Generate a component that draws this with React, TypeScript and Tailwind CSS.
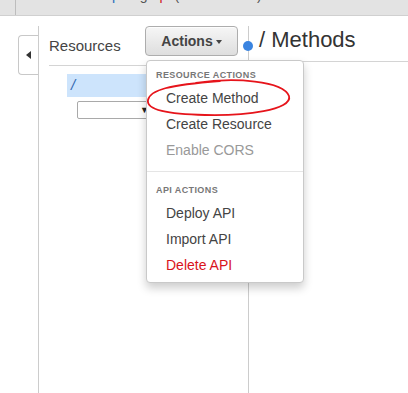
import React from "react";

export default function App() {
  return (
    <div className="relative w-[408px] h-[393px] bg-white overflow-hidden font-['Liberation_Sans',Arial,sans-serif] text-[#444]">
      {/* top bar */}
      <div className="h-[16px] bg-[#e3e3e3] border-b border-[#d0d0d0] flex">
        <div className="w-[16px] h-full border-r border-[#bdbdbd]" />
        <div className="flex-1 h-full overflow-hidden">
          <div className="-mt-[13px] flex items-start text-[14px] leading-[16px] whitespace-pre text-[#555]">
            <span className="ml-[96px] text-[#2a6ebb]">p</span>
            <span className="ml-[20px]">g</span>
            <span className="ml-[12px] text-[#d0191e]">p</span>
            <span className="ml-[7px]">(</span>
            <span className="ml-[78px]">)</span>
          </div>
        </div>
      </div>

      {/* main */}
      <div className="flex pt-[10px]">
        {/* gutter with collapse tab */}
        <div className="w-[38px] shrink-0">
          <div className="ml-[18px] mt-[9px] w-[20px] h-[40px] border border-r-0 border-[#c8c8c8] rounded-l-[4px] flex items-center justify-center">
            <div className="w-0 h-0 border-y-[4px] border-y-transparent border-r-[5px] border-r-[#333] ml-[-1px]" />
          </div>
        </div>

        {/* left panel */}
        <div className="w-[210px] shrink-0 h-[367px] border-l border-[#cccccc]">
          <div className="mx-[10px] h-[40px] border-b border-[#d4d4d4] flex items-start justify-between">
            <div className="mt-[11px] text-[15px] leading-[18px] text-[#444]">Resources</div>
            <div className="w-[93px] h-[30px] rounded-[4px] border border-[#adadad] bg-gradient-to-b from-[#f6f6f6] to-[#dedede] flex items-center justify-center gap-[3px] shadow-[inset_0_1px_0_rgba(255,255,255,0.8)]">
              <span className="text-[14px] font-bold text-[#444]">Actions</span>
              <span className="w-0 h-0 border-x-[3.5px] border-x-transparent border-t-[4px] border-t-[#444] mt-[1px]" />
            </div>
          </div>
          <div className="ml-[28px] mr-[10px] mt-[8px] h-[23px] bg-[#cde4fc] flex items-center pl-[4px]">
            <span className="text-[15px] italic text-[#3367b0]">/</span>
          </div>
          <div className="ml-[38px] mt-[4px] w-[76px] h-[18px] border border-[#a9a9a9] rounded-[2px] flex items-center justify-end pr-[3px]">
            <span className="text-[9px] leading-none text-[#222]">▼</span>
          </div>
        </div>

        {/* right panel */}
        <div className="relative flex-1 h-[367px] border-l border-[#cccccc]">
          <div className="absolute left-[-6px] top-[15px] w-[10px] h-[10px] rounded-full bg-[#3a84e0]" />
          <div className="h-[36px] border-b border-[#d4d4d4] pl-[10px] pt-[1px]">
            <span className="text-[22px] leading-[26px] text-[#333]">/ Methods</span>
          </div>
        </div>
      </div>

      {/* dropdown menu */}
      <div className="absolute left-[146px] top-[60px] w-[158px] h-[223px] bg-white border border-[#c9c9c9] rounded-[4px] shadow-[0_5px_10px_rgba(0,0,0,0.2)] pt-[7px]">
        <div className="pl-[9px] h-[14px] leading-[14px] text-[9px] font-bold tracking-[0.4px] text-[#777] mb-[3px]">RESOURCE ACTIONS</div>
        <div className="pl-[19px] h-[26px] leading-[26px] text-[14px] text-[#444]">Create Method</div>
        <div className="pl-[19px] h-[26px] leading-[26px] text-[14px] text-[#444]">Create Resource</div>
        <div className="pl-[19px] h-[26px] leading-[26px] text-[14px] text-[#999]">Enable CORS</div>
        <div className="mt-[8px] border-t border-[#e5e5e5]" />
        <div className="mt-[11px] pl-[9px] h-[14px] leading-[14px] text-[9px] font-bold tracking-[0.4px] text-[#777] mb-[3px]">API ACTIONS</div>
        <div className="pl-[19px] h-[26px] leading-[26px] text-[14px] text-[#444]">Deploy API</div>
        <div className="pl-[19px] h-[26px] leading-[26px] text-[14px] text-[#444]">Import API</div>
        <div className="pl-[19px] h-[26px] leading-[26px] text-[14px] text-[#d9131b]">Delete API</div>
      </div>

      {/* red annotation */}
      <svg className="absolute left-0 top-0 pointer-events-none" width="408" height="393" viewBox="0 0 408 393">
        <path
          d="M 196 83 C 235 77, 283 81, 289 96 C 293 110, 245 116, 205 115 C 168 114, 146 110, 148 100 C 150 90, 168 85, 220 81"
          fill="none"
          stroke="#e6141b"
          strokeWidth="1.8"
          strokeLinecap="round"
        />
      </svg>
    </div>
  );
}
